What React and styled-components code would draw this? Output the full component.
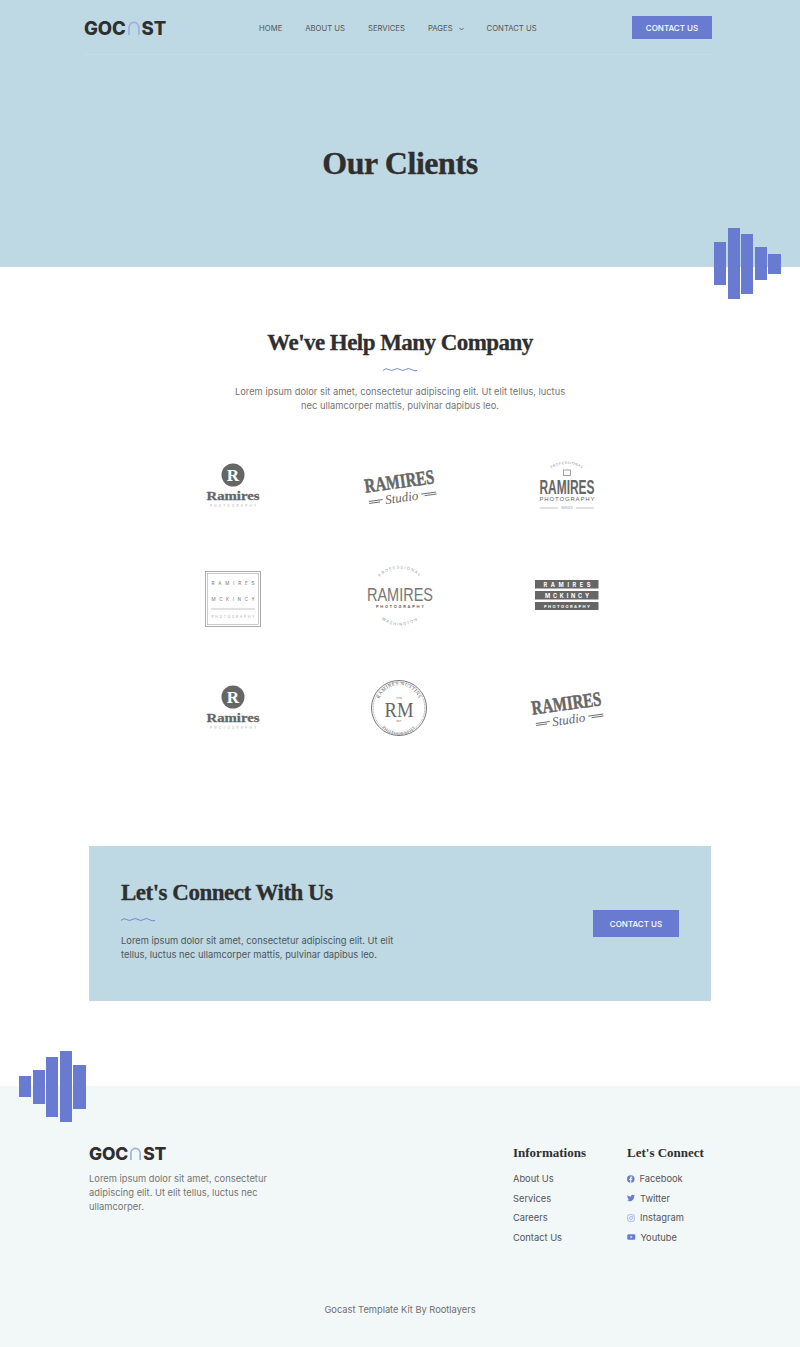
import React from 'react'
import styled, { createGlobalStyle } from 'styled-components'

const blue = '#687bd1'
const sky = '#bed9e4'
const dark = '#2f2f2f'
const body = '"Inter", "Open Sans", sans-serif'
const serif = '"Liberation Serif", "Times New Roman", serif'

const GlobalStyle = createGlobalStyle`
  html, body { margin: 0; padding: 0; background: #fff; }
  * { box-sizing: border-box; }
  body { font-family: ${body}; color: #666; }
  a { text-decoration: none; color: inherit; }
  ul { list-style: none; margin: 0; padding: 0; }
`

const Page = styled.div`
  position: relative;
  width: 800px;
  height: 1347px;
  overflow: hidden;
`

const Hero = styled.section`
  height: 267px;
  background: ${sky};
  display: flex;
  flex-direction: column;
  align-items: center;
`

const Header = styled.header`
  align-self: flex-start;
  width: 628px;
  height: 55px;
  margin-left: 84px;
  padding-top: 16px;
  display: flex;
  align-items: flex-start;
  border-bottom: 1px solid #c5dde7;
`

const Brand = styled.div`
  display: flex;
  align-items: center;
  height: ${p => p.$h}px;
  padding-top: ${p => p.$top}px;
  font-family: ${body};
  font-weight: 800;
  font-size: ${p => p.$size}px;
  letter-spacing: -0.1px;
  color: ${dark};
  line-height: 1;
  svg { margin: 0 1px; }
`

const Nav = styled.nav`
  display: flex;
  align-items: center;
  height: 23px;
  padding-top: 1px;
  gap: 23px;
  margin-left: 93px;
  font-size: 7.7px;
  font-weight: 400;
  color: #555;
  text-transform: uppercase;
  svg { margin-left: 6px; vertical-align: 0; }
`

const Button = styled.a`
  display: flex;
  align-items: center;
  justify-content: center;
  width: ${p => p.$w}px;
  height: ${p => p.$h}px;
  margin-left: ${p => (p.$push ? 'auto' : 0)};
  background: ${blue};
  color: #fff;
  font-size: 8px;
  font-weight: 500;
  text-transform: uppercase;
`

const HeroTitle = styled.h1`
  margin: 0;
  flex: 1;
  padding-top: 4px;
  display: flex;
  align-items: center;
  font-family: ${serif};
  font-weight: 700;
  font-size: 32px;
  letter-spacing: -0.45px;
  -webkit-text-stroke: 0.3px ${dark};
  color: ${dark};
`

const Bars = styled.div`
  position: absolute;
  display: flex;
  align-items: center;
  gap: 1.3px;
  left: ${p => p.$left}px;
  top: ${p => p.$top}px;
`

const Bar = styled.span`
  display: block;
  width: 12.3px;
  height: ${p => p.$h}px;
  background: ${blue};
`

const Clients = styled.section`
  height: 579px;
  padding-top: 61px;
  display: flex;
  flex-direction: column;
  align-items: center;
`

const Heading = styled.h2`
  margin: 0;
  font-family: ${serif};
  font-weight: 700;
  font-size: 23px;
  line-height: 30px;
  letter-spacing: -0.55px;
  -webkit-text-stroke: 0.3px ${dark};
  color: ${dark};
`

const Wave = styled.svg`
  display: block;
  margin: ${p => p.$margin};
`

const Lead = styled.p`
  margin: ${p => p.$margin || 0};
  width: ${p => p.$w}px;
  text-align: ${p => p.$align || 'center'};
  font-size: 9.35px;
  line-height: 14px;
  color: ${p => p.$color || '#757575'};
`

const LogoGrid = styled.div`
  display: grid;
  grid-template-columns: repeat(3, 167px);
  grid-auto-rows: 111px;
  margin-top: 17px;
`

const LogoCell = styled.div`
  display: flex;
  align-items: center;
  justify-content: center;
`

const Connect = styled.section`
  width: 622px;
  height: 155px;
  margin: 0 auto;
  padding: 0 32px;
  background: ${sky};
  display: flex;
  align-items: center;
  justify-content: space-between;
`

const ConnectText = styled.div`
  padding-bottom: 7px;
`

const ConnectTitle = styled.h2`
  margin: 0;
  font-family: ${serif};
  font-weight: 700;
  font-size: 23px;
  line-height: 28px;
  letter-spacing: -0.5px;
  -webkit-text-stroke: 0.3px ${dark};
  color: ${dark};
`

const Footer = styled.footer`
  margin-top: 85px;
  height: 261px;
  padding: 60px 89px 0;
  background: #f2f7f8;
  position: relative;
`

const FooterRow = styled.div`
  display: flex;
  align-items: flex-start;
`

const About = styled.div`
  width: 424px;
`

const Column = styled.div`
  width: ${p => p.$w}px;
`

const ColumnTitle = styled.h4`
  margin: 0 0 9px;
  font-family: ${serif};
  font-weight: 700;
  font-size: 13px;
  line-height: 14px;
  color: ${dark};
`

const LinkRow = styled.li`
  display: flex;
  align-items: center;
  height: 19.5px;
  gap: 5px;
  font-size: 9.3px;
  color: #555;
  svg { flex: none; }
`

const Credit = styled.p`
  margin: 0;
  position: absolute;
  left: 0;
  right: 0;
  bottom: 31px;
  text-align: center;
  font-size: 9.3px;
  line-height: 12px;
  color: #6f6f6f;
`

const Squiggle = ({ margin }) => (
  <Wave $margin={margin} width="34" height="5" viewBox="0 0 34 5">
    <path d="M0 3.500 Q2.800 .5 5.600 2.500 T11.300 2.500 T17 2.500 T22.600 2.500 T28.300 2.500 T34 3.500" fill="none" stroke={blue} strokeWidth="0.9" />
  </Wave>
)

const Arch = ({ size }) => (
  <svg width={size * 0.75} height={size * 0.8} viewBox="0 0 14 15">
    <path d="M2 15 V7 a5 5.600 0 0 1 10 0 V15" fill="none" stroke="#9fb0e4" strokeWidth="1.800" />
  </svg>
)

const Logo = ({ h = 23, size = 18.5, top = 1 }) => (
  <Brand $h={h} $size={size} $top={top}>GOC<Arch size={size} />ST</Brand>
)

const gray = '#666'
const LogoSvg = ({ children }) => (
  <svg width="100" height="80" viewBox="0 0 100 80" fill={gray} style={{ overflow: 'visible' }}>{children}</svg>
)

const RoundR = () => (
  <LogoSvg>
    <circle cx="50" cy="29" r="11.500" />
    <text x="50" y="35" textAnchor="middle" fontFamily="Liberation Serif" fontWeight="700" fontSize="17" fill="#fff">R</text>
    <text x="50" y="54" textAnchor="middle" fontFamily="Liberation Serif" fontWeight="700" fontSize="13" stroke={gray} strokeWidth="0.3" textLength="53" lengthAdjust="spacingAndGlyphs">Ramires</text>
    <text x="50" y="61" textAnchor="middle" fontFamily="Inter" fontSize="3" fill="#aaa" textLength="46">PHOTOGRAPHY</text>
  </LogoSvg>
)

const Studio = () => (
  <LogoSvg>
    <g transform="rotate(-8 50 40)">
      <text x="50" y="42" textAnchor="middle" fontFamily="Liberation Serif" fontWeight="700" fontSize="20" stroke={gray} strokeWidth="0.5" textLength="70" lengthAdjust="spacingAndGlyphs">RAMIRES</text>
      <text x="50" y="56" textAnchor="middle" fontFamily="Liberation Serif" fontStyle="italic" fontSize="13">Studio</text>
      <path d="M17 51h14M17 53h11M70 51h15M73 53h12" stroke={gray} strokeWidth="0.9" />
    </g>
  </LogoSvg>
)

const Narrow = () => (
  <LogoSvg>
    <path id="arcTop" d="M30 26 A29 29 0 0 1 70 26" fill="none" />
    <text fontFamily="Inter" fontSize="3.400" fill="#888" letterSpacing="0.6" textAnchor="middle"><textPath href="#arcTop" startOffset="50%">PROFESSIONAL</textPath></text>
    <rect x="46.500" y="24" width="7" height="5.500" fill="none" stroke="#888" strokeWidth="0.8" />
    <text x="50" y="48" textAnchor="middle" fontFamily="Liberation Sans" fontWeight="700" fontSize="21" textLength="55" lengthAdjust="spacingAndGlyphs">RAMIRES</text>
    <text x="50" y="55" textAnchor="middle" fontFamily="Liberation Sans" fontSize="6" textLength="55">PHOTOGRAPHY</text>
    <path d="M23 62h18M59 62h18" stroke="#aaa" strokeWidth="0.7" />
    <text x="50" y="63" textAnchor="middle" fontFamily="Inter" fontSize="3" fill="#999">IMAGES</text>
  </LogoSvg>
)

const Framed = () => (
  <LogoSvg>
    <rect x="22.500" y="14.500" width="55" height="55" fill="none" stroke="#999" strokeWidth="0.8" />
    <rect x="24.500" y="16.500" width="51" height="51" fill="none" stroke="#aaa" strokeWidth="0.6" />
    <text x="50" y="27.500" textAnchor="middle" fontFamily="Inter" fontSize="4.600" fill="#777" textLength="43">RAMIRES</text>
    <text x="50" y="43.500" textAnchor="middle" fontFamily="Inter" fontSize="4.600" fill="#777" textLength="43">MCKINCY</text>
    <path d="M28 52h44" stroke="#aaa" strokeWidth="0.7" />
    <text x="50" y="61" textAnchor="middle" fontFamily="Inter" fontSize="3.500" fill="#aaa" textLength="43">PHOTOGRAPHY</text>
  </LogoSvg>
)

const Ring = () => (
  <LogoSvg>
    <path id="ringTop" d="M25 27 A28 28 0 0 1 75 27" fill="none" />
    <path id="ringBottom" d="M26 56 A29 29 0 0 0 74 56" fill="none" />
    <text fontFamily="Inter" fontSize="4" fill="#999" letterSpacing="1.200" textAnchor="middle"><textPath href="#ringTop" startOffset="50%">PROFESSIONAL</textPath></text>
    <text fontFamily="Inter" fontSize="4" fill="#999" letterSpacing="1.200" textAnchor="middle"><textPath href="#ringBottom" startOffset="50%">WASHINGTON</textPath></text>
    <text x="50" y="44" textAnchor="middle" fontFamily="Liberation Sans" fontSize="17.500" fill="#777" textLength="66" lengthAdjust="spacingAndGlyphs">RAMIRES</text>
    <text x="50" y="50.500" textAnchor="middle" fontFamily="Inter" fontWeight="600" fontSize="4" fill="#555" textLength="48">PHOTOGRAPHY</text>
  </LogoSvg>
)

const Stacked = () => (
  <LogoSvg>
    <rect x="18" y="23" width="63.500" height="8.500" />
    <rect x="18" y="34" width="63.500" height="8.500" />
    <rect x="18" y="45" width="63.500" height="8" />
    <text x="50" y="29.500" textAnchor="middle" fontFamily="Inter" fontWeight="700" fontSize="5.600" fill="#fff" textLength="47">RAMIRES</text>
    <text x="50" y="40.500" textAnchor="middle" fontFamily="Inter" fontWeight="700" fontSize="5.600" fill="#fff" textLength="44">MCKINCY</text>
    <text x="50" y="50.500" textAnchor="middle" fontFamily="Inter" fontWeight="700" fontSize="4" fill="#fff" textLength="46">PHOTOGRAPHY</text>
  </LogoSvg>
)

const Seal = () => (
  <LogoSvg>
    <circle cx="49" cy="40" r="27.500" fill="none" stroke={gray} strokeWidth="0.9" />
    <circle cx="49" cy="40" r="25.800" fill="none" stroke={gray} strokeWidth="0.5" strokeDasharray="1 .6" />
    <path id="sealTop" d="M28 38 A21 21 0 0 1 70 38" fill="none" />
    <path id="sealBottom" d="M26 44 A23 23 0 0 0 72 44" fill="none" />
    <text fontFamily="Liberation Serif" fontSize="5" letterSpacing="0.4" textAnchor="middle"><textPath href="#sealTop" startOffset="50%">RAMIRES NUSTINS</textPath></text>
    <text fontFamily="Liberation Serif" fontSize="4.400" letterSpacing="0.5" textAnchor="middle"><textPath href="#sealBottom" startOffset="50%">PHOTOGRAPHY</textPath></text>
    <text x="49" y="31" textAnchor="middle" fontFamily="Inter" fontSize="2.600">1778</text>
    <text x="49" y="49" textAnchor="middle" fontFamily="Liberation Serif" fontSize="22" textLength="29" lengthAdjust="spacingAndGlyphs">RM</text>
    <text x="49" y="54" textAnchor="middle" fontFamily="Inter" fontSize="2.600">EST</text>
  </LogoSvg>
)

const logos = [RoundR, Studio, Narrow, Framed, Ring, Stacked, RoundR, Seal, Studio]

const Facebook = () => (
  <svg width="7.500" height="8" viewBox="0 0 24 24"><circle cx="12" cy="12" r="12" fill={blue} /><path d="M13.500 24v-9h3l.5-3.500h-3.500V9.400c0-1 .4-1.700 1.800-1.700H17V4.500c-.4 0-1.400-.2-2.600-.2-2.600 0-4.400 1.600-4.400 4.500v2.700H7V15h3v9z" fill="#f2f7f8" /></svg>
)
const Twitter = () => (
  <svg width="8" height="8" viewBox="0 0 24 24"><path fill={blue} d="M23.900 4.600c-.9.400-1.800.7-2.800.8 1-.6 1.800-1.600 2.200-2.700-1 .6-2 1-3.100 1.200A4.900 4.900 0 0 0 11.800 8.400C7.700 8.200 4.100 6.200 1.700 3.200c-1.300 2.300-.7 5.200 1.500 6.600-.8 0-1.600-.2-2.200-.6 0 2.300 1.600 4.400 3.900 4.900-.7.200-1.500.2-2.200.1.600 2 2.500 3.400 4.600 3.400A9.900 9.900 0 0 1 0 19.600 14 14 0 0 0 21.500 7.100c1-.7 1.800-1.500 2.400-2.500z" /></svg>
)
const Instagram = () => (
  <svg width="8" height="8" viewBox="0 0 24 24" fill="none" stroke={blue} strokeWidth="2" opacity="0.75"><rect x="2" y="2" width="20" height="20" rx="5" /><circle cx="12" cy="12" r="4.500" /><circle cx="17.500" cy="6.500" r="0.600" fill={blue} /></svg>
)
const Youtube = () => (
  <svg width="8.500" height="8" viewBox="0 0 24 24"><rect y="3.500" width="24" height="17" rx="4" fill={blue} /><path d="M10 8.500v7l6-3.500z" fill="#f2f7f8" /></svg>
)

const infoLinks = ['About Us', 'Services', 'Careers', 'Contact Us']
const socials = [
  ['Facebook', Facebook],
  ['Twitter', Twitter],
  ['Instagram', Instagram],
  ['Youtube', Youtube],
]

export default function App() {
  return (
    <Page>
      <GlobalStyle />
      <Hero>
        <Header>
          <Logo />
          <Nav>
            <a>Home</a>
            <a>About Us</a>
            <a>Services</a>
            <a>
              Pages
              <svg width="5" height="4" viewBox="0 0 5 4"><path d="M.5 1 2.500 3 4.500 1" fill="none" stroke="#555" strokeWidth="0.9" /></svg>
            </a>
            <a>Contact Us</a>
          </Nav>
          <Button $push $w={80} $h={23}>Contact Us</Button>
        </Header>
        <HeroTitle>Our Clients</HeroTitle>
      </Hero>

      <Bars $left={714} $top={228}>
        {[43, 71, 60, 33, 20].map((h, i) => <Bar key={i} $h={h} />)}
      </Bars>

      <Clients>
        <Heading>We've Help Many Company</Heading>
        <Squiggle margin="9px 0 13px" />
        <Lead $w={336}>
          Lorem ipsum dolor sit amet, consectetur adipiscing elit. Ut elit tellus, luctus nec ullamcorper mattis, pulvinar dapibus leo.
        </Lead>
        <LogoGrid>
          {logos.map((Item, i) => (
            <LogoCell key={i}><Item /></LogoCell>
          ))}
        </LogoGrid>
      </Clients>

      <Connect>
        <ConnectText>
          <ConnectTitle>Let's Connect With Us</ConnectTitle>
          <Squiggle margin="10px 0 12px" />
          <Lead $w={285} $align="left" $color="#4d5559">
            Lorem ipsum dolor sit amet, consectetur adipiscing elit. Ut elit tellus, luctus nec ullamcorper mattis, pulvinar dapibus leo.
          </Lead>
        </ConnectText>
        <Button $w={86} $h={27}>Contact Us</Button>
      </Connect>

      <Footer>
        <FooterRow>
          <About>
            <Logo h={15} size={17.4} top={0} />
            <Lead $w={190} $align="left" $margin="11px 0 0">
              Lorem ipsum dolor sit amet, consectetur adipiscing elit. Ut elit tellus, luctus nec ullamcorper.
            </Lead>
          </About>
          <Column $w={114}>
            <ColumnTitle>Informations</ColumnTitle>
            <ul>
              {infoLinks.map(label => <LinkRow key={label}>{label}</LinkRow>)}
            </ul>
          </Column>
          <Column $w={84}>
            <ColumnTitle>Let's Connect</ColumnTitle>
            <ul>
              {socials.map(([label, Icon]) => (
                <LinkRow key={label}><Icon />{label}</LinkRow>
              ))}
            </ul>
          </Column>
        </FooterRow>
        <Credit>Gocast Template Kit By Rootlayers</Credit>
      </Footer>

      <Bars $left={19} $top={1051}>
        {[21, 34, 60, 71, 44].map((h, i) => <Bar key={i} $h={h} />)}
      </Bars>
    </Page>
  )
}
